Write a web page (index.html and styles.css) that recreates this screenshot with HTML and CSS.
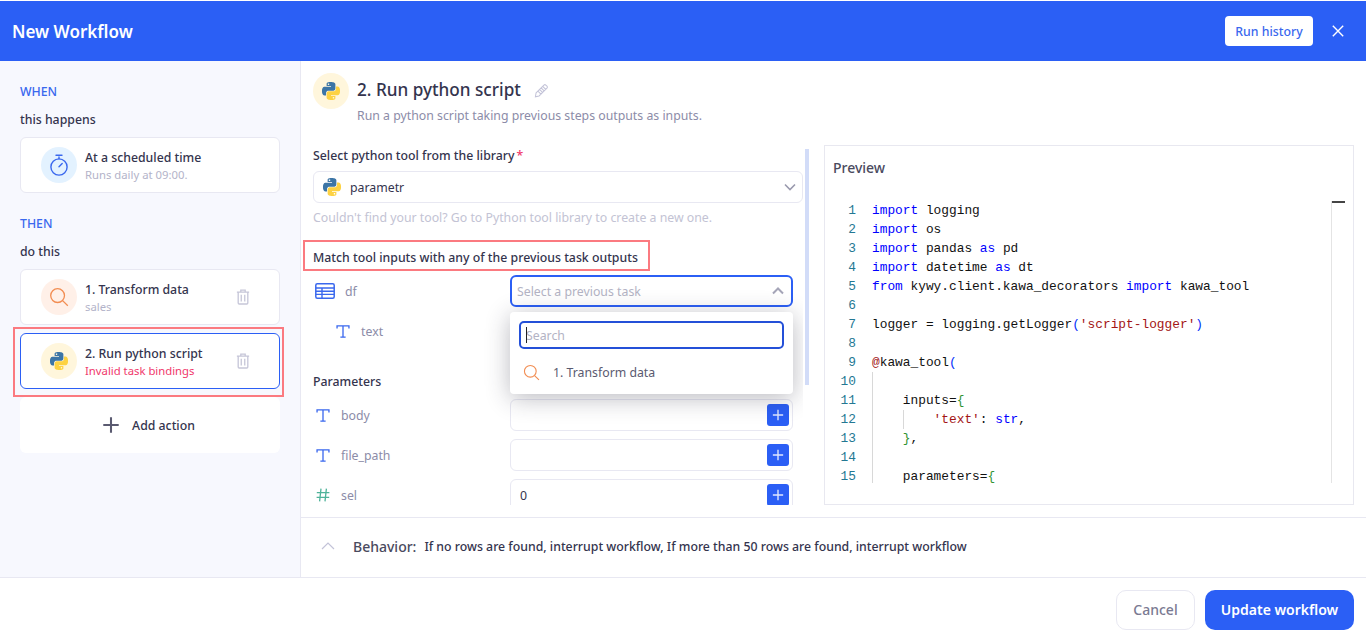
FILE: index.html
```html
<!DOCTYPE html>
<html lang="en">
<head>
<meta charset="utf-8">
<title>New Workflow</title>
<link rel="stylesheet" href="styles.css">
</head>
<body>
<svg class="defs" width="0" height="0" aria-hidden="true">
  <symbol id="py" viewBox="0 0 24 24">
    <path fill="#3c75a6" fill-rule="evenodd" d="M14.25.18l.9.2.73.26.59.3.45.32.34.34.25.34.16.33.1.3.04.26.02.2-.01.13V8.5l-.05.63-.13.55-.21.46-.26.38-.3.31-.33.25-.35.19-.35.14-.33.1-.3.07-.26.04-.21.02H8.77l-.69.05-.59.14-.5.22-.41.27-.33.32-.27.35-.2.36-.15.37-.1.35-.07.32-.04.27-.02.21v3.06H3.17l-.21-.03-.28-.07-.32-.12-.35-.18-.36-.26-.36-.36-.35-.46-.32-.59-.28-.73-.21-.88-.14-1.05-.05-1.23.06-1.22.16-1.04.24-.87.32-.71.36-.57.4-.44.42-.33.42-.24.4-.16.36-.1.32-.05.24-.01h.16l.06.01h8.16v-.83H6.18l-.01-2.75-.02-.37.05-.34.11-.31.17-.28.25-.26.31-.23.38-.2.44-.18.51-.15.58-.12.64-.1.71-.06.77-.04.84-.02 1.27.05zm-6.3 1.98l-.23.33-.08.41.08.41.23.34.33.22.41.09.41-.09.33-.22.23-.34.08-.41-.08-.41-.23-.33-.33-.22-.41-.09-.41.09z"/>
    <path fill="#fdd243" fill-rule="evenodd" d="M21.04 6.11l.28.06.32.12.35.18.36.27.36.35.35.47.32.59.28.73.21.88.14 1.04.05 1.23-.06 1.23-.16 1.04-.24.86-.32.71-.36.57-.4.45-.42.33-.42.24-.4.16-.36.09-.32.05-.24.02-.16-.01h-8.22v.82h5.84l.01 2.76.02.36-.05.34-.11.31-.17.29-.25.25-.31.24-.38.2-.44.17-.51.15-.58.13-.64.09-.71.07-.77.04-.84.01-1.27-.04-1.07-.14-.9-.2-.73-.25-.59-.3-.45-.33-.34-.34-.25-.34-.16-.33-.1-.3-.04-.25-.02-.2.01-.13v-5.34l.05-.64.13-.54.21-.46.26-.38.3-.32.33-.24.35-.2.35-.14.33-.1.3-.06.26-.04.21-.02.13-.01h5.84l.69-.05.59-.14.5-.21.41-.28.33-.32.27-.35.2-.36.15-.36.1-.35.07-.32.04-.28.02-.21V6.07h2.09l.14.01zm-6.47 14.25l-.23.33-.08.41.08.41.23.33.33.23.41.08.41-.08.33-.23.23-.33.08-.41-.08-.41-.23-.33-.33-.23-.41-.08-.41.08z"/>
  </symbol>
  <symbol id="search" viewBox="0 0 20 20">
    <circle cx="8.6" cy="8.6" r="6.9" fill="none" stroke="currentColor" stroke-width="1.3"/>
    <path d="M13.6 13.6l5.2 5.2" fill="none" stroke="currentColor" stroke-width="1.3"/>
  </symbol>
  <symbol id="trash" viewBox="0 0 16 18">
    <path fill="none" stroke="currentColor" stroke-width="1.5" d="M1 3.5h14M5.5 3.5V1.2h5v2.3M2.5 3.5v12.3c0 .7.5 1.2 1.2 1.2h8.6c.7 0 1.2-.5 1.2-1.2V3.5M6 6.5v7.5M10 6.5v7.5"/>
  </symbol>
  <symbol id="tee" viewBox="0 0 16 16">
    <path fill="none" stroke="currentColor" stroke-width="1.5" d="M1.2 4.6V1.6h13.6v3M8 1.6v12.9M5 14.5h6"/>
  </symbol>
  <symbol id="plus" viewBox="0 0 14 14">
    <path fill="none" stroke="currentColor" stroke-width="1.6" d="M7 1v12M1 7h12"/>
  </symbol>
</svg>

<div class="app">
  <header class="topbar">
    <h1 class="topbar-title">New Workflow</h1>
    <button class="history-btn">Run history</button>
    <svg class="close-icon" viewBox="0 0 12 12"><path d="M.8.8l10.4 10.4M11.2.8L.8 11.2" fill="none" stroke="#fff" stroke-width="1.4"/></svg>
  </header>

  <div class="main">
    <aside class="sidebar">
      <div class="side-head">WHEN</div>
      <div class="side-sub">this happens</div>
      <div class="card">
        <span class="bubble bubble-blue">
          <svg class="watch" viewBox="0 0 20 22"><path d="M7 1.2h6M10 3v1.8M10 12.8l3.2-3.2" fill="none" stroke="#3a68ee" stroke-width="1.4" stroke-linecap="round"/><circle cx="10" cy="13" r="8.1" fill="none" stroke="#3a68ee" stroke-width="1.4"/></svg>
        </span>
        <div class="card-text">
          <div class="card-title">At a scheduled time</div>
          <div class="card-sub">Runs daily at 09:00.</div>
        </div>
      </div>

      <div class="side-head side-head-then">THEN</div>
      <div class="side-sub">do this</div>
      <div class="card">
        <span class="bubble bubble-orange"><svg class="bubble-search"><use href="#search"/></svg></span>
        <div class="card-text">
          <div class="card-title">1. Transform data</div>
          <div class="card-sub">sales</div>
        </div>
        <svg class="trash"><use href="#trash"/></svg>
      </div>
      <div class="card card-active">
        <span class="bubble bubble-yellow"><svg class="py-18"><use href="#py"/></svg></span>
        <div class="card-text">
          <div class="card-title">2. Run python script</div>
          <div class="card-sub card-error">Invalid task bindings</div>
        </div>
        <svg class="trash"><use href="#trash"/></svg>
        <span class="mark mark-card"></span>
      </div>
      <div class="add-action">
        <svg class="add-plus"><use href="#plus"/></svg>
        <span>Add action</span>
      </div>
    </aside>

    <section class="content">
      <div class="content-top">
        <div class="step-head">
          <span class="bubble bubble-yellow"><svg class="py-18"><use href="#py"/></svg></span>
          <div class="step-text">
            <div class="step-title-row">
              <h2 class="step-title">2. Run python script</h2>
              <svg class="pencil" viewBox="0 0 16 16"><path d="M2.2 10.6L10.6 2.2c.6-.6 1.4-.6 2 0l1.2 1.2c.6.6.6 1.4 0 2l-8.4 8.4-3.9.9zM9.3 3.5l3.2 3.2M7.6 5.2l3.2 3.2M5.9 6.9l3.2 3.2M4.2 8.6l3.2 3.2" fill="none" stroke="#c3c3d8" stroke-width="1.1"/></svg>
            </div>
            <p class="step-desc">Run a python script taking previous steps outputs as inputs.</p>
          </div>
        </div>

        <div class="columns">
          <div class="form">
            <div class="form-label">Select python tool from the library<span class="req">*</span></div>
            <div class="select">
              <svg class="py-18"><use href="#py"/></svg>
              <span class="select-value">parametr</span>
              <svg class="chev" viewBox="0 0 12 8"><path d="M1 1.5l5 5 5-5" fill="none" stroke="#9a9aae" stroke-width="1.6"/></svg>
            </div>
            <div class="hint">Couldn't find your tool? Go to Python tool library to create a new one.</div>

            <div class="form-label form-label-match">Match tool inputs with any of the previous task outputs<span class="mark mark-label"></span></div>

            <div class="row row-df">
              <div class="row-name">
                <svg class="table-icon" viewBox="0 0 20 16"><rect x=".8" y=".8" width="18.4" height="14.4" rx="1.5" fill="none" stroke="#3a68ee" stroke-width="1.5"/><path d="M.8 5h18.4M.8 8.2h18.4M.8 11.4h18.4M7 5v10" fill="none" stroke="#3a68ee" stroke-width="1.4"/></svg>
                <span>df</span>
              </div>
              <div class="field field-open">
                <span class="placeholder">Select a previous task</span>
                <svg class="chev chev-up" viewBox="0 0 12 8"><path d="M1 6.5l5-5 5 5" fill="none" stroke="#a5a5b8" stroke-width="2"/></svg>
                <div class="dropdown">
                  <div class="dd-search"><span class="caret"></span><span class="placeholder">Search</span></div>
                  <div class="dd-item">
                    <svg class="dd-icon"><use href="#search"/></svg>
                    <span>1. Transform data</span>
                  </div>
                </div>
              </div>
            </div>
            <div class="row row-nested">
              <div class="row-name">
                <svg class="tee"><use href="#tee"/></svg>
                <span>text</span>
              </div>
            </div>

            <div class="form-label form-label-params">Parameters</div>

            <div class="row row-param">
              <div class="row-name"><svg class="tee"><use href="#tee"/></svg><span>body</span></div>
              <div class="field"><span class="add-btn"><svg class="add-btn-icon"><use href="#plus"/></svg></span></div>
            </div>
            <div class="row row-param">
              <div class="row-name"><svg class="tee"><use href="#tee"/></svg><span>file_path</span></div>
              <div class="field"><span class="add-btn"><svg class="add-btn-icon"><use href="#plus"/></svg></span></div>
            </div>
            <div class="row row-param">
              <div class="row-name">
                <svg class="hash" viewBox="0 0 14 14"><path d="M5 .6L3.6 13.4M10.4.6L9 13.4M.8 4.6h12.6M.6 9.4h12.6" fill="none" stroke="#4fb39a" stroke-width="1.3"/></svg>
                <span>sel</span>
              </div>
              <div class="field"><span class="field-value">0</span><span class="add-btn"><svg class="add-btn-icon"><use href="#plus"/></svg></span></div>
            </div>
          </div>
          <div class="scrollbar"></div>

          <div class="preview">
            <div class="preview-title">Preview</div>
            <div class="editor">
              <div class="gutter">
                <div>1</div><div>2</div><div>3</div><div>4</div><div>5</div><div>6</div><div>7</div><div>8</div><div>9</div><div>10</div><div>11</div><div>12</div><div>13</div><div>14</div><div>15</div>
              </div>
              <pre class="code"><span class="guide guide-1"></span><span class="guide guide-2"></span><span class="k">import</span> logging
<span class="k">import</span> os
<span class="k">import</span> pandas <span class="k">as</span> pd
<span class="k">import</span> datetime <span class="k">as</span> dt
<span class="k">from</span> kywy.client.kawa_decorators <span class="k">import</span> kawa_tool

logger = logging.getLogger<span class="b1">(</span><span class="s">'script-logger'</span><span class="b1">)</span>

<span class="s">@</span>kawa_tool<span class="b1">(</span>

    inputs=<span class="b2">{</span>
        <span class="s">'text'</span>: <span class="k">str</span>,
    <span class="b2">}</span>,

    parameters=<span class="b2">{</span></pre>
              <div class="minimap"><span class="minimap-mark"></span></div>
            </div>
          </div>
        </div>
      </div>

      <div class="behavior">
        <svg class="behavior-chev" viewBox="0 0 14 8"><path d="M1 7l6-6 6 6" fill="none" stroke="#c3c3d8" stroke-width="1.2"/></svg>
        <span class="behavior-label">Behavior:</span>
        <span class="behavior-text">If no rows are found, interrupt workflow, If more than 50 rows are found, interrupt workflow</span>
      </div>
    </section>
  </div>

  <footer class="footer">
    <button class="btn btn-cancel">Cancel</button>
    <button class="btn btn-primary">Update workflow</button>
  </footer>
</div>
</body>
</html>
```

FILE: styles.css
```css
* { box-sizing: border-box; }
html, body { margin: 0; padding: 0; height: 100%; overflow: hidden; background: #fff; }
body { font-family: "Noto Sans", "Open Sans", sans-serif; font-size: 12.3px; color: #34344e; }
.defs { position: absolute; }
svg { display: block; flex: none; }
h1, h2, p { margin: 0; }
button { font-family: inherit; cursor: pointer; }

.app { height: 642px; display: flex; flex-direction: column; padding-top: 1px; }

/* top bar */
.topbar { height: 60px; flex: none; background: #2b5ff5; display: flex; align-items: center; padding: 0 22px 0 12px; }
.topbar-title { flex: 1; font-size: 17px; font-weight: 600; color: #fff; line-height: 24px; margin-top: 2px; }
.history-btn { width: 88px; height: 30px; background: #fff; border: 0; border-radius: 4px; color: #3a68ee; font-size: 12.3px; font-weight: 500; padding: 0; margin-right: 19px; }
.close-icon { width: 12px; height: 12px; }

.main { flex: 1; min-height: 0; display: flex; }

/* sidebar */
.sidebar { width: 301px; flex: none; background: #f7f8fe; border-right: 1px solid #e8e8f2; padding: 22px 20px 0; }
.side-head { font-weight: 500; line-height: 18px; color: #3a68ee; }
.side-head-then { margin-top: 22px; }
.side-sub { font-weight: 500; line-height: 18px; margin-top: 10px; margin-bottom: 8px; }
.card { position: relative; height: 56px; background: #fff; border: 1px solid #e8e8f2; border-radius: 6px; display: flex; align-items: center; padding: 0 29px 0 20px; margin-bottom: 8px; }
.card:last-of-type { margin-bottom: 0; }
.card-active { border-color: #2b5ff5; margin-bottom: 8px; }
.bubble { width: 36px; height: 36px; border-radius: 50%; flex: none; display: flex; align-items: center; justify-content: center; }
.bubble-blue { background: #e3f2ff; }
.bubble-orange { background: #fff0e8; }
.bubble-yellow { background: #fff6dc; }
.watch { width: 20px; height: 22px; }
.bubble-search { width: 20px; height: 20px; color: #f28d52; }
.py-18 { width: 18px; height: 18px; }
.card-text { flex: 1; margin-left: 8px; min-width: 0; }
.card-title { font-weight: 500; line-height: 18px; margin-top: 1px; }
.card-sub { font-size: 11.3px; line-height: 16px; color: #b3b3c9; }
.card-error { color: #f0386b; }
.trash { width: 14px; height: 16px; color: #c6c6d8; }
.add-action { height: 56px; background: #fff; border-radius: 6px; display: flex; align-items: center; justify-content: center; gap: 12px; padding-right: 3px; font-weight: 500; }
.add-plus { width: 18px; height: 18px; color: #5a5a70; }

/* red annotation boxes */
.mark { position: absolute; border: 2px solid #fb7a80; pointer-events: none; }
.mark-card { left: -8px; top: -7px; width: 271px; height: 70px; }
.mark-label { left: -10px; top: -9px; width: 347px; height: 31px; }

/* content */
.content { flex: 1; min-width: 0; display: flex; flex-direction: column; }
.content-top { flex: 1; min-height: 0; padding: 12px; display: flex; flex-direction: column; }
.step-head { display: flex; gap: 8px; height: 72px; flex: none; }
.step-text { min-width: 0; }
.step-title-row { display: flex; align-items: center; gap: 13px; height: 32px; margin-top: 1px; }
.step-title { font-size: 17.15px; font-weight: 500; line-height: 32px; }
.pencil { width: 15px; height: 15px; }
.step-desc { line-height: 18px; color: #8c8ca8; margin-top: 1px; }

.columns { flex: 1; min-height: 0; display: flex; }
.form { width: 500px; flex: none; overflow: hidden; margin-left: -10px; padding-left: 10px; }
.form-label { position: relative; font-weight: 500; line-height: 18px; margin-top: 2px; width: fit-content; }
.req { color: #f0386b; margin-left: 2px; }
.select { height: 32px; margin-top: 6px; border: 1px solid #e8e8f2; border-radius: 6px; display: flex; align-items: center; padding: 0 6px 0 9px; }
.select-value { flex: 1; margin-left: 9px; }
.chev { width: 12px; height: 8px; }
.hint { line-height: 18px; color: #c3c3d4; margin-top: 6px; }
.form-label-match { margin-top: 22px; }
.form-label-params { margin-top: 26px; }

.row { display: flex; align-items: center; justify-content: space-between; height: 32px; color: #8c8ca8; padding-right: 10px; }
.row-df { margin-top: 8px; }
.row-nested { margin-top: 8px; }
.row-param { margin-top: 8px; }
.row-name { display: flex; align-items: center; gap: 11px; padding-left: 3px; }
.row-nested .row-name { padding-left: 23px; }
.table-icon { width: 20px; height: 16px; margin-right: -1px; margin-left: -1px; }
.tee { width: 14px; height: 15px; color: #3a68ee; }
.hash { width: 14px; height: 14px; }

.field { position: relative; width: 283px; height: 32px; background: #fff; border: 1px solid #e8e8f2; border-radius: 6px; display: flex; align-items: center; justify-content: space-between; padding: 0 3px 0 9px; color: #34344e; }
.field-open { border: 2px solid #2b5ff5; padding: 0 7px 0 5px; }
.placeholder { color: #b3b3c4; }
.chev-up { width: 12px; height: 8px; }
.row-param .field { justify-content: flex-end; }
.row-param .field-value { margin-right: auto; }
.add-btn { width: 22px; height: 22px; border-radius: 3px; background: #2b5ff5; display: flex; align-items: center; justify-content: center; }
.add-btn-icon { width: 12px; height: 12px; color: #dfe7ff; }

.dropdown { position: absolute; z-index: 3; left: -2px; top: 35px; width: 283px; height: 82px; background: #fff; border-radius: 4px; box-shadow: 0 4px 24px rgba(40, 40, 60, .32); padding: 9px; }
.dd-search { position: relative; height: 28px; border: 2px solid #2450d8; border-radius: 5px; display: flex; align-items: center; padding-left: 5px; }
.caret { width: 1px; height: 16px; background: #222; position: absolute; left: 5px; top: 4px; }
.dd-item { display: flex; align-items: center; gap: 13px; margin-top: 13px; padding-left: 4px; height: 20px; color: #5a5a70; }
.dd-icon { width: 17px; height: 17px; color: #f28d52; }

.scrollbar { width: 4px; height: 236px; flex: none; background: #d2dcf8; margin: 4px 0 0 2px; }

/* preview */
.preview { width: 530px; flex: none; margin-left: 15px; border: 1px solid #e8e8f0; padding: 12px 8px 0; display: flex; flex-direction: column; height: 360px; }
.preview-title { font-size: 14px; font-weight: 500; line-height: 20px; color: #4a4a5e; }
.editor { display: flex; margin-top: 23px; height: 282px; position: relative; overflow: hidden; font-family: "Liberation Mono", "DejaVu Sans Mono", monospace; font-size: 12.83px; line-height: 19px; }
.gutter { width: 23px; flex: none; text-align: right; color: #237893; }
.code { position: relative; margin: 0 0 0 16px; font: inherit; color: #111; }
.k { color: #0000ff; }
.s { color: #a31515; }
.b1 { color: #0431fa; }
.b2 { color: #319331; }
.guide { position: absolute; width: 1px; background: #d8d8d8; }
.guide-1 { left: 0; top: 171px; height: 111px; }
.guide-2 { left: 31px; top: 209px; height: 19px; }
.minimap { position: absolute; left: 498px; top: 0; bottom: 0; width: 14px; border-left: 1px solid #e4e4e4; }
.minimap-mark { position: absolute; left: 0; top: 0; width: 13px; height: 2px; background: #444; }

/* behaviour */
.behavior { height: 60px; flex: none; border-top: 1px solid #e8e8f2; display: flex; align-items: center; padding: 0 0 3px 20px; }
.behavior-chev { width: 14px; height: 8px; }
.behavior-label { font-size: 14px; font-weight: 500; margin-left: 18px; color: #4a4a5e; }
.behavior-text { font-size: 12.3px; font-weight: 500; margin-left: 8px; }

/* footer */
.footer { height: 65px; flex: none; border-top: 1px solid #e8e8f2; display: flex; justify-content: flex-end; align-items: flex-start; gap: 10px; padding: 12px 12px 0 0; }
.btn { height: 40px; border-radius: 10px; font-size: 14px; padding: 0 0 2px; }
.btn-cancel { width: 79px; background: #fff; border: 1px solid #e8e8f2; color: #7a7a92; font-weight: 500; }
.btn-primary { width: 149px; background: #2b5ff5; border: 0; color: #fff; font-weight: 600; }
```
